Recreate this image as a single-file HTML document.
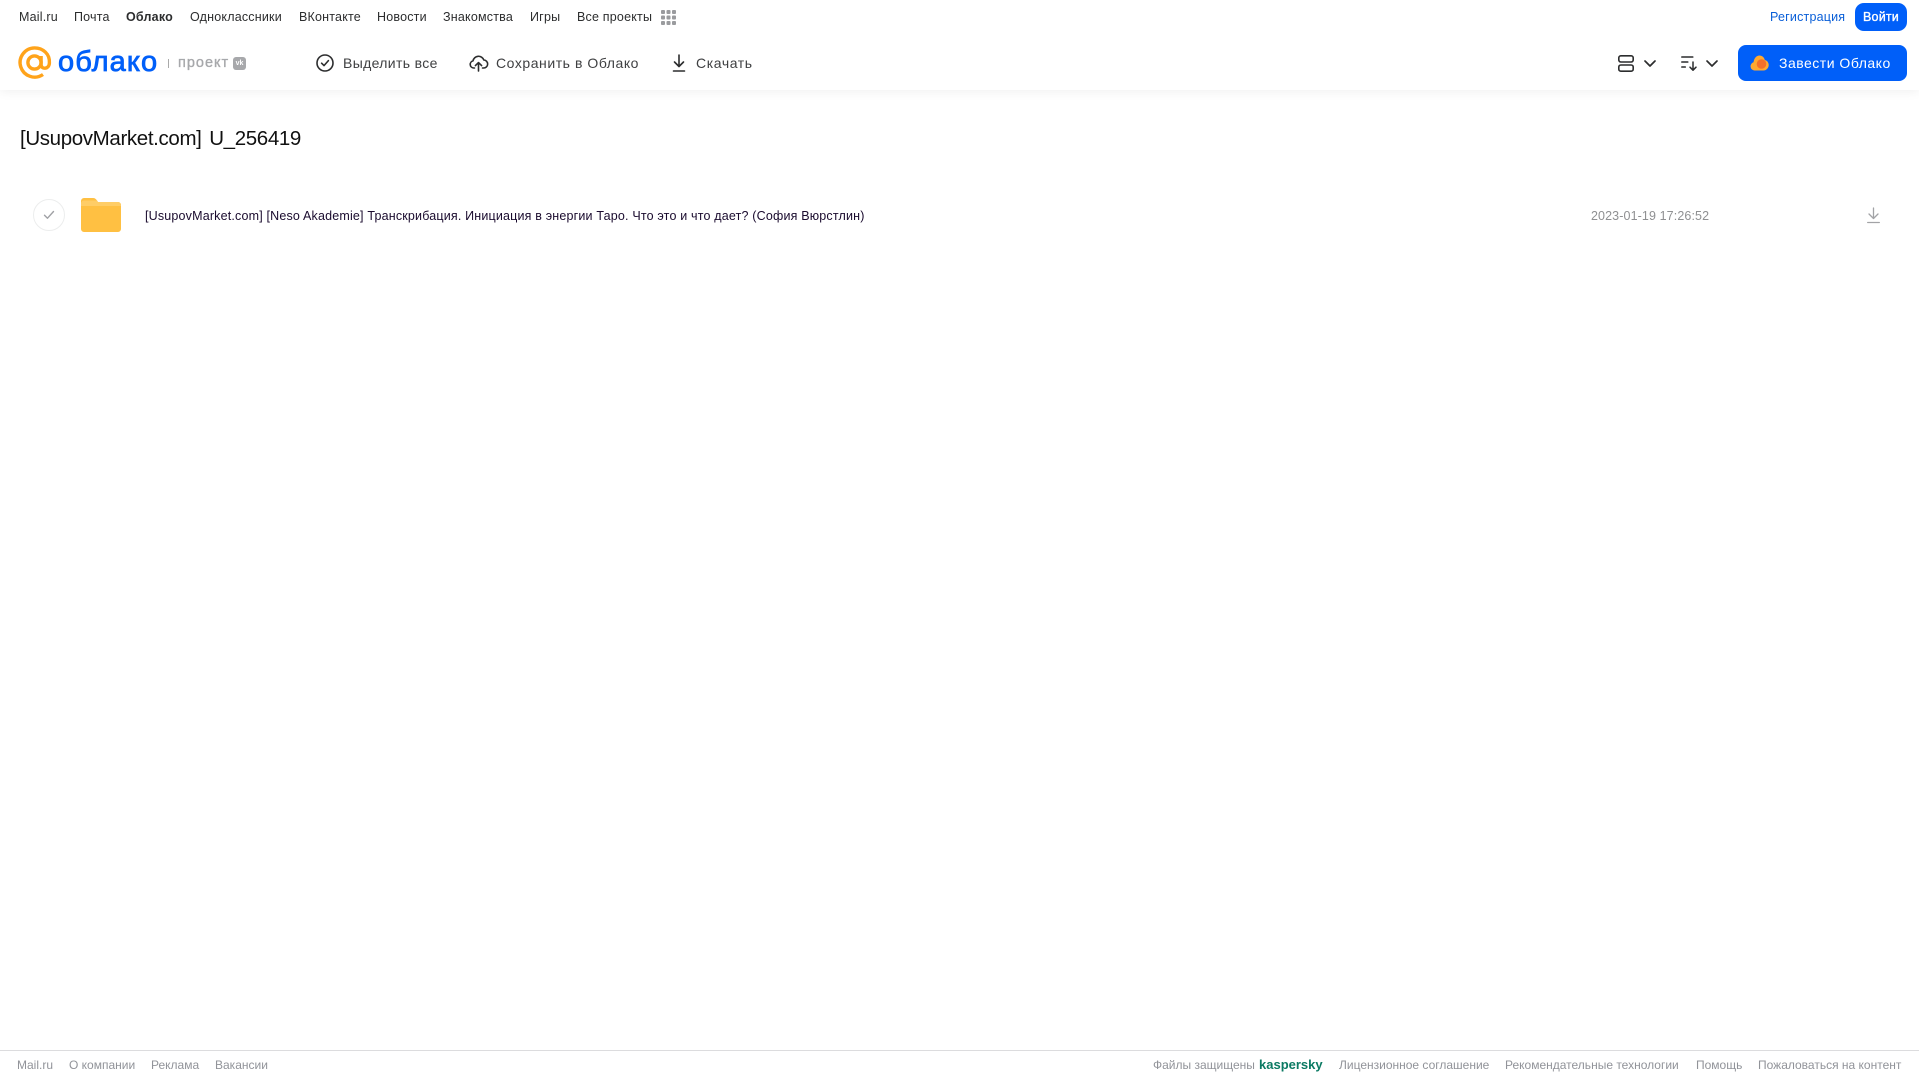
<!DOCTYPE html>
<html lang="ru"><head><meta charset="utf-8"><title>Облако</title>
<style>
html,body{margin:0;padding:0;background:#fff;width:1919px;height:1079px;overflow:hidden}
body{position:relative;font-family:"Liberation Sans",Arial,sans-serif}
.t{position:absolute;white-space:nowrap;line-height:18px;height:18px}
.n{top:8px;font-size:12.5px;color:#2c2d2e;letter-spacing:.2px}
.a{top:54px;font-size:14px;color:#3f4042;letter-spacing:.35px}
.f{top:1056px;font-size:12px;color:#919399}
svg{position:absolute;overflow:visible}
#hdr{position:absolute;left:0;top:0;width:1919px;height:90px;background:#fff;box-shadow:0 2px 10px rgba(0,0,0,.06)}
</style></head><body>
<div id="hdr"></div>
<span class="t n" style="left:19px">Mail.ru</span>
<span class="t n" style="left:74px">Почта</span>
<span class="t n" style="left:126px;font-weight:bold">Облако</span>
<span class="t n" style="left:190px">Одноклассники</span>
<span class="t n" style="left:299px">ВКонтакте</span>
<span class="t n" style="left:377px">Новости</span>
<span class="t n" style="left:443px">Знакомства</span>
<span class="t n" style="left:530px">Игры</span>
<span class="t n" style="left:577px">Все проекты</span>
<svg style="left:661px;top:10px" width="15" height="15" fill="#9a9b9e"><rect x="0" y="0" width="4" height="4" rx="1"/><rect x="5.5" y="0" width="4" height="4" rx="1"/><rect x="11" y="0" width="4" height="4" rx="1"/><rect x="0" y="5.5" width="4" height="4" rx="1"/><rect x="5.5" y="5.5" width="4" height="4" rx="1"/><rect x="11" y="5.5" width="4" height="4" rx="1"/><rect x="0" y="11" width="4" height="4" rx="1"/><rect x="5.5" y="11" width="4" height="4" rx="1"/><rect x="11" y="11" width="4" height="4" rx="1"/></svg>
<span class="t n" style="left:1770px;color:#0a5fd8">Регистрация</span>
<div style="position:absolute;left:1855px;top:3px;width:52px;height:28px;border-radius:9px;background:#005ff9"></div>
<span class="t n" style="left:1863px;color:#fff;-webkit-text-stroke:.35px #fff">Войти</span>

<svg style="left:18px;top:46px" width="34" height="34" viewBox="0 0 34 34" fill="none" stroke="#ffa31a" stroke-width="3.4"><circle cx="16.5" cy="16.5" r="6.6"/><path d="M23.1 10v8.500c0 5.200 7.900 5.200 8.300-1.500C32 8 25 1.900 16.500 1.900A14.600 14.600 0 1 0 25 28.500"/></svg>
<span class="t" style="left:58px;top:46px;height:32px;line-height:32px;font-size:29px;color:#005ff9;letter-spacing:1.1px;-webkit-text-stroke:.8px #005ff9">облако</span>
<div style="position:absolute;left:168px;top:59px;width:1px;height:9px;background:#aaa"></div>
<span class="t" style="left:178px;top:54px;font-size:14.5px;color:#a7a8ab;letter-spacing:1px;-webkit-text-stroke:.35px #a7a8ab">проект</span>
<div style="position:absolute;left:233px;top:57px;width:13px;height:13px;border-radius:3px;background:#a7a8ab;color:#fff;font:bold 7px/13px 'Liberation Sans',sans-serif;text-align:center">vk</div>

<svg style="left:316px;top:54px" width="18" height="18" viewBox="0 0 18 18" fill="none" stroke="#2c2d2e" stroke-width="1.6" stroke-linecap="round" stroke-linejoin="round"><circle cx="9" cy="9" r="8"/><path d="M5.600 9.200l2.400 2.400 4.400-5"/></svg>
<span class="t a" style="left:343px">Выделить все</span>
<svg style="left:469px;top:54px" width="19" height="18" viewBox="0 0 19 18" fill="none" stroke="#2c2d2e" stroke-width="1.6" stroke-linecap="round" stroke-linejoin="round"><path d="M5.500 14H4.600a3.600 3.600 0 0 1-.6-7.100A5.600 5.600 0 0 1 14.800 6a4 4 0 0 1-.3 8h-1"/><path d="M9.500 17V9M6.400 11.600l3.100-3 3.100 3"/></svg>
<span class="t a" style="left:496px;letter-spacing:.55px">Сохранить в Облако</span>
<svg style="left:671px;top:54px" width="16" height="18" viewBox="0 0 16 18" fill="none" stroke="#2c2d2e" stroke-width="1.6" stroke-linecap="round" stroke-linejoin="round"><path d="M8 1v11M3.500 8L8 12.500 12.500 8M2.500 17h11"/></svg>
<span class="t a" style="left:696px;letter-spacing:.6px">Скачать</span>

<svg style="left:1618px;top:55px" width="16" height="17" viewBox="0 0 16 17" fill="none" stroke="#2c2d2e" stroke-width="1.6"><rect x=".8" y=".8" width="14.400" height="6.200" rx="2"/><rect x=".8" y="10" width="14.400" height="6.200" rx="2"/></svg>
<svg style="left:1644px;top:60px" width="12" height="7" viewBox="0 0 12 7" fill="none" stroke="#2c2d2e" stroke-width="1.7" stroke-linecap="round" stroke-linejoin="round"><path d="M1 1l5 5 5-5"/></svg>
<svg style="left:1681px;top:56px" width="16" height="15" viewBox="0 0 16 15" fill="none" stroke="#2c2d2e" stroke-width="1.5" stroke-linecap="round" stroke-linejoin="round"><path d="M.8 1h11M.8 6h6M.8 11h3.500M12 6v8M9 11.200l3 3 3-3"/></svg>
<svg style="left:1706px;top:60px" width="12" height="7" viewBox="0 0 12 7" fill="none" stroke="#2c2d2e" stroke-width="1.7" stroke-linecap="round" stroke-linejoin="round"><path d="M1 1l5 5 5-5"/></svg>

<div style="position:absolute;left:1738px;top:45px;width:169px;height:36px;border-radius:8px;background:#005ff9"></div>
<svg style="left:1750px;top:55px" width="19" height="16" viewBox="0 0 19 16"><path d="M4.500 15.500a4.200 4.200 0 0 1-1-8.200C4.200 3 6.500.5 9.500.5c2.600 0 4.700 1.900 5.300 4.500 2.300.5 3.900 2.500 3.900 5 0 3-2.400 5.500-5.200 5.500z" fill="#ffa930"/><circle cx="11.500" cy="9" r="4.800" fill="#f4702a"/></svg>
<span class="t a" style="left:1779px;color:#fff;letter-spacing:.5px">Завести Облако</span>

<span class="t" style="left:20px;top:126px;height:26px;line-height:26px;font-size:20.500px;color:#111;letter-spacing:-.36px;word-spacing:2.400px">[UsupovMarket.com] U_256419</span>

<div style="position:absolute;left:33px;top:199px;width:30px;height:30px;border:1px solid #eceded;border-radius:50%"></div>
<svg style="left:43px;top:210px" width="12" height="10" viewBox="0 0 12 10" fill="none" stroke="#a0a1a5" stroke-width="1.400" stroke-linecap="round" stroke-linejoin="round"><path d="M1.500 5.200l3 3L10.500 1.500"/></svg>
<svg style="left:81px;top:198px" width="40" height="34" viewBox="0 0 40 34"><path d="M0 3a3 3 0 0 1 3-3h9c2 0 3 1 4 2.500L17 4h20a3 3 0 0 1 3 3v24a3 3 0 0 1-3 3H3a3 3 0 0 1-3-3z" fill="#ffc042"/><path d="M0 8h40v-1a3 3 0 0 0-3-3H17l-1-1.500H3a3 3 0 0 0-3 3z" fill="#ffcd66"/></svg>
<span class="t" style="left:145px;top:207px;font-size:12.500px;color:#1a0b2e;letter-spacing:.18px">[UsupovMarket.com] [Neso Akademie] Транскрибация. Инициация в энергии Таро. Что это и что дает? (София Вюрстлин)</span>
<span class="t" style="left:1591px;top:207px;font-size:12.500px;color:#8f9092;letter-spacing:.11px">2023-01-19 17:26:52</span>
<svg style="left:1867px;top:207px" width="13" height="17" viewBox="0 0 13 17" fill="none" stroke="#a2a3a6" stroke-width="1.300" stroke-linejoin="round" stroke-linecap="round"><path d="M6.500 1v10M2 7l4.500 4.500L11 7M.700 15.500h11.600"/></svg>

<div style="position:absolute;left:0;top:1050px;width:1919px;height:1px;background:#dcdcde"></div>
<span class="t f" style="left:17px">Mail.ru</span>
<span class="t f" style="left:69px">О компании</span>
<span class="t f" style="left:151px">Реклама</span>
<span class="t f" style="left:215px">Вакансии</span>
<span class="t f" style="left:1153px">Файлы защищены</span>
<span class="t f" style="left:1259px;color:#0b7a63;font-weight:bold;font-size:13px">kaspersky</span>
<span class="t f" style="left:1339px">Лицензионное соглашение</span>
<span class="t f" style="left:1505px">Рекомендательные технологии</span>
<span class="t f" style="left:1696px">Помощь</span>
<span class="t f" style="left:1758px">Пожаловаться на контент</span>
</body></html>
